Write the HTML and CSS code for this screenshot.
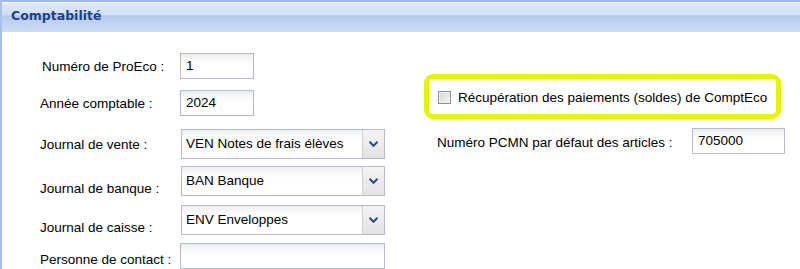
FILE: index.html
```html
<html>
    <head>
        <title>Comptabilité</title>
        <link rel="stylesheet" href="styles.css">
    </head>
    <body>
        <div class="panel">
            <div class="panel-head"><span class="panel-title">Comptabilité</span></div>
            <div class="panel-body">
                <div class="col-left">
                    <div class="row r1"><span class="lbl">Numéro de ProEco :</span><div class="txt short">1</div></div>
                    <div class="row r2"><span class="lbl lbl-a">Année comptable :</span><div class="txt short">2024</div></div>
                    <div class="row r3"><span class="lbl lbl-a">Journal de vente :</span><div class="combo"><span class="combo-val">VEN Notes de frais élèves</span><span class="combo-btn"><svg width="9" height="6" viewBox="0 0 9 6"><path d="M0.5 0.8 L4.5 4.8 L8.5 0.8" fill="none" stroke="#2b4c8c" stroke-width="2"/></svg></span></div></div>
                    <div class="row r4 low"><span class="lbl lbl-a">Journal de banque :</span><div class="combo"><span class="combo-val">BAN Banque</span><span class="combo-btn"><svg width="9" height="6" viewBox="0 0 9 6"><path d="M0.5 0.8 L4.5 4.8 L8.5 0.8" fill="none" stroke="#2b4c8c" stroke-width="2"/></svg></span></div></div>
                    <div class="row r5 low"><span class="lbl lbl-a">Journal de caisse :</span><div class="combo"><span class="combo-val">ENV Enveloppes</span><span class="combo-btn"><svg width="9" height="6" viewBox="0 0 9 6"><path d="M0.5 0.8 L4.5 4.8 L8.5 0.8" fill="none" stroke="#2b4c8c" stroke-width="2"/></svg></span></div></div>
                    <div class="row r6 mid"><span class="lbl lbl-a">Personne de contact :</span><div class="txt long"></div></div>
                </div>
                <div class="col-right">
                    <div class="highlight">
                        <span class="check"></span>
                        <span class="check-lbl">Récupération des paiements (soldes) de ComptEco</span>
                    </div>
                    <div class="row pcmn"><span class="lbl-r">Numéro PCMN par défaut des articles :</span><div class="txt pcmn-txt">705000</div></div>
                </div>
            </div>
        </div>
    </body>
</html>
```

FILE: styles.css
```css
body {
    margin: 0;
    font-family: "Liberation Sans", Arial, sans-serif;
    font-size: 13.5px;
    color: #000;
    background: #fff;
}
.panel {
    height: 269px;
    border-left: 2px solid #a7c1ec;
    border-top: 2px solid #9dbbe9;
    box-sizing: border-box;
}
.panel-head {
    height: 30px;
    border-top: 1px solid #fff;
    box-sizing: border-box;
    background: linear-gradient(#dde8f6 0, #d0e0f3 12px, #a9c4ea 13px, #b6cdef 14px, #cddcf5 29px);
    padding-left: 9px;
}
.panel-title {
    font-family: "DejaVu Sans", Verdana, sans-serif;
    font-weight: bold;
    font-size: 12.5px;
    line-height: 26px;
    color: #1b3f8e;
}
.panel-body {
    display: flex;
    padding-left: 38px;
}
.col-left {
    width: 347px;
}
.row {
    display: flex;
    align-items: center;
}
.r1 { margin-top: 21px; }
.r2 { margin-top: 11px; }
.r3 { margin-top: 13px; }
.r4 { margin-top: 7px; }
.r5 { margin-top: 9px; }
.r6 { margin-top: 8px; }
.lbl {
    width: 140px;
    padding-left: 2px;
    box-sizing: border-box;
}
.lbl-a {
    padding-left: 0;
}
.low .lbl {
    padding-top: 14px;
}
.mid .lbl {
    padding-top: 7px;
}
.txt {
    height: 26px;
    border: 1px solid #b7bacb;
    box-sizing: border-box;
    background: linear-gradient(#e9ecef 0, #fbfbfc 7px, #fff 12px);
    padding: 0 5px;
    line-height: 24px;
}
.short { width: 74px; }
.long { width: 205px; }
.combo {
    display: flex;
    width: 204px;
    height: 30px;
    margin-left: 1px;
    border: 1px solid #b7bacb;
    box-sizing: border-box;
    background: linear-gradient(#eceef1 0, #fbfbfc 7px, #fff 12px);
}
.combo-val {
    flex: 1;
    padding-left: 4px;
    line-height: 28px;
}
.combo-btn {
    width: 21px;
    border-left: 1px solid #cdd0d6;
    background: linear-gradient(#f4f4f4, #e2e2e2);
    display: flex;
    align-items: center;
    justify-content: center;
}
.col-right {
    margin-left: 37px;
    padding-top: 42px;
}
.highlight {
    width: 357px;
    height: 45px;
    border: 5px solid #e4f500;
    border-radius: 9px;
    box-sizing: border-box;
    display: flex;
    align-items: center;
    padding-left: 9px;
    padding-top: 2px;
}
.check {
    width: 13px;
    height: 13px;
    border: 1px solid #8d8f90;
    box-sizing: border-box;
    background: linear-gradient(135deg, #d5d6d8, #f5f5f5);
    box-shadow: inset 0 0 0 1px #f2f2f2;
    margin-right: 7px;
}
.pcmn {
    margin-top: 9px;
    padding-left: 13px;
}
.lbl-r {
    width: 255px;
    padding-top: 2px;
}
.pcmn-txt {
    width: 93px;
}
```
